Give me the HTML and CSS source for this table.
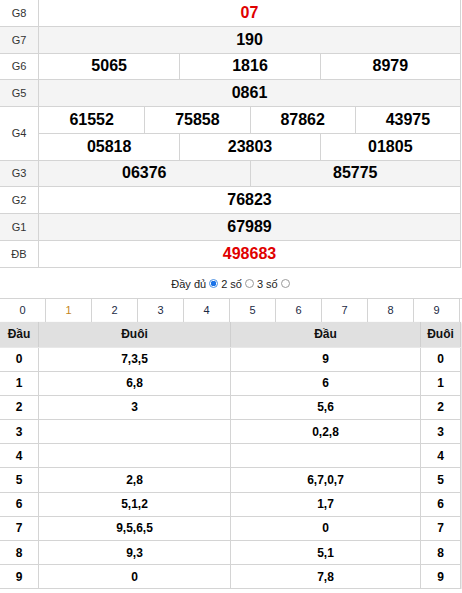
FILE: index.html
```html
<!DOCTYPE html>
<html lang="vi">
<head>
<meta charset="utf-8">
<link rel="stylesheet" href="styles.css">
</head>
<body>
<div class="results">
  <div class="row">
    <div class="label">G8</div>
    <div class="cells c1"><div class="cell red">07</div></div>
  </div>
  <div class="row alt">
    <div class="label">G7</div>
    <div class="cells c1"><div class="cell">190</div></div>
  </div>
  <div class="row">
    <div class="label">G6</div>
    <div class="cells c3"><div class="cell">5065</div><div class="cell">1816</div><div class="cell">8979</div></div>
  </div>
  <div class="row alt">
    <div class="label">G5</div>
    <div class="cells c1"><div class="cell">0861</div></div>
  </div>
  <div class="row">
    <div class="label">G4</div>
    <div class="stack">
      <div class="cells c4 sub"><div class="cell">61552</div><div class="cell">75858</div><div class="cell">87862</div><div class="cell">43975</div></div>
      <div class="cells c3"><div class="cell">05818</div><div class="cell">23803</div><div class="cell">01805</div></div>
    </div>
  </div>
  <div class="row alt">
    <div class="label">G3</div>
    <div class="cells c2"><div class="cell">06376</div><div class="cell">85775</div></div>
  </div>
  <div class="row">
    <div class="label">G2</div>
    <div class="cells c1"><div class="cell">76823</div></div>
  </div>
  <div class="row alt">
    <div class="label">G1</div>
    <div class="cells c1"><div class="cell">67989</div></div>
  </div>
  <div class="row">
    <div class="label">ĐB</div>
    <div class="cells c1"><div class="cell red">498683</div></div>
  </div>
</div>

<div class="options">
  <span>Đầy đủ</span><span class="radio on"></span>
  <span>2 số</span><span class="radio"></span>
  <span>3 số</span><span class="radio"></span>
</div>

<div class="digits">
  <div class="d">0</div><div class="d hl">1</div><div class="d">2</div><div class="d">3</div><div class="d">4</div>
  <div class="d">5</div><div class="d">6</div><div class="d">7</div><div class="d">8</div><div class="d">9</div>
</div>

<div class="loto">
  <div class="lrow head"><div>Đầu</div><div>Đuôi</div><div>Đầu</div><div>Đuôi</div></div>
  <div class="lrow"><div>0</div><div>7,3,5</div><div>9</div><div>0</div></div>
  <div class="lrow"><div>1</div><div>6,8</div><div>6</div><div>1</div></div>
  <div class="lrow"><div>2</div><div>3</div><div>5,6</div><div>2</div></div>
  <div class="lrow"><div>3</div><div></div><div>0,2,8</div><div>3</div></div>
  <div class="lrow"><div>4</div><div></div><div></div><div>4</div></div>
  <div class="lrow"><div>5</div><div>2,8</div><div>6,7,0,7</div><div>5</div></div>
  <div class="lrow"><div>6</div><div>5,1,2</div><div>1,7</div><div>6</div></div>
  <div class="lrow"><div>7</div><div>9,5,6,5</div><div>0</div><div>7</div></div>
  <div class="lrow"><div>8</div><div>9,3</div><div>5,1</div><div>8</div></div>
  <div class="lrow"><div>9</div><div>0</div><div>7,8</div><div>9</div></div>
</div>
</body>
</html>
```

FILE: styles.css
```css
* { box-sizing: border-box; }
html, body { margin: 0; padding: 0; background: #fff; }
body {
  font-family: "Liberation Sans", Arial, sans-serif;
  color: #000;
  width: 462px;
}

.results {
  width: 461px;
  border-right: 1px solid #d4d4d4;
}
.row {
  display: grid;
  grid-template-columns: 39px 1fr;
  border-bottom: 1px solid #d4d4d4;
}
.row.alt { background: #f4f4f4; }
.label {
  border-right: 1px solid #d4d4d4;
  display: flex;
  align-items: center;
  justify-content: center;
  font-size: 11px;
  color: #333;
}
.stack { display: flex; flex-direction: column; }
.cells { display: grid; }
.cells.c1 { grid-template-columns: 1fr; }
.cells.c2 { grid-template-columns: repeat(2, 1fr); }
.cells.c3 { grid-template-columns: repeat(3, 1fr); }
.cells.c4 { grid-template-columns: repeat(4, 1fr); }
.cells.sub { border-bottom: 1px solid #d4d4d4; }
.cell {
  height: 25.75px;
  display: flex;
  align-items: center;
  justify-content: center;
  font-size: 16px;
  font-weight: bold;
}
.cell + .cell { border-left: 1px solid #d4d4d4; }
.red { color: #e00000; }

.options {
  height: 30px;
  display: flex;
  align-items: center;
  justify-content: center;
  font-size: 11px;
  color: #222;
  gap: 2px;
  padding-top: 2px;
}
.radio {
  width: 9px;
  height: 9px;
  border-radius: 50%;
  border: 1px solid #9a9a9a;
  background: #fff;
  display: inline-block;
  margin: 0 1px;
}
.radio.on {
  border: 1px solid #4a90e2;
  background: radial-gradient(circle, #1a73e8 0 2.6px, #fff 3px);
}

.digits {
  display: grid;
  grid-template-columns: repeat(10, 46px);
  border-top: 1px solid #d4d4d4;
  height: 24px;
}
.d {
  border-right: 1px solid #d4d4d4;
  display: flex;
  align-items: center;
  justify-content: center;
  font-size: 11px;
  color: #1b2a44;
}
.d.hl { color: #c4861c; }

.loto {
  width: 461px;
  box-shadow: 0 1px 2px rgba(0, 0, 0, 0.25);
}
.lrow {
  display: grid;
  grid-template-columns: 39px 192px 190px 40px;
  height: 24.2px;
  border-bottom: 1px solid #d4d4d4;
}
.lrow > div {
  border-right: 1px solid #d4d4d4;
  display: flex;
  align-items: center;
  justify-content: center;
  font-size: 12px;
  font-weight: bold;
  color: #000;
}
.lrow.head {
  height: 26px;
  background: #e0e0e0;
  border-bottom: 1px solid #e8e8e8;
}
.lrow.head > div {
  border-right-color: #cfcfcf;
  font-size: 12px;
  color: #111;
}
```
